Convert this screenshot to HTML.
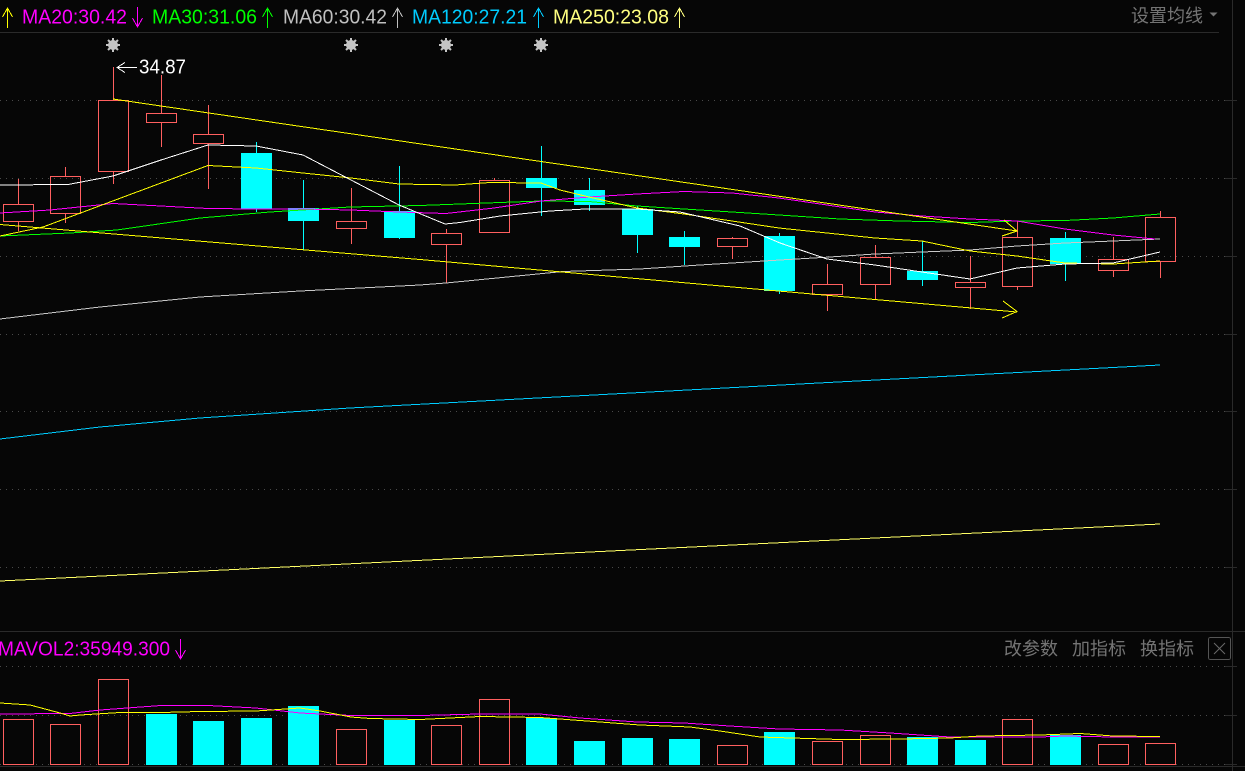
<!DOCTYPE html>
<html><head><meta charset="utf-8"><style>
html,body{margin:0;padding:0;background:#060606;width:1245px;height:771px;overflow:hidden}
svg{display:block;position:absolute;left:0;top:0}
text{font-family:"Liberation Sans","Noto Sans CJK SC",sans-serif}
</style></head><body>
<svg width="1245" height="771" viewBox="0 0 1245 771" xmlns="http://www.w3.org/2000/svg">
<rect width="1245" height="771" fill="#060606"/>
<g shape-rendering="crispEdges" fill="none">
<path d="M0 32.5H1219M0 631.5H1245M0 766.5H1245M1232.5 0V771" stroke="#2a2a2a"/>
<path d="M0 100.5H1225M0 178.5H1225M0 256.5H1225M0 334.5H1225M0 411.5H1225M0 489.5H1225M0 567.5H1225M0 666.5H1225M0 715.5H1225M0 764.5H1225" stroke="#4a4a4a" stroke-dasharray="1 5"/>
<path d="M1225 100.5H1237M1225 178.5H1237M1225 256.5H1237M1225 334.5H1237M1225 411.5H1237M1225 489.5H1237M1225 567.5H1237M1225 666.5H1237M1225 715.5H1237M1225 764.5H1237" stroke="#2a2a2a"/>
<!-- red candles -->
<g stroke="#ff5f5f">
<path d="M18.5 179V204M18.5 222V231M65.5 167V176M65.5 214V223M113.5 67V100M113.5 172V184M161.5 75V113M161.5 123V147M208.5 105V134M208.5 144V189M351.5 188V221M351.5 229V244M446.5 229V233M446.5 245V283M494.5 178V180M732.5 237V238M732.5 247V259M827.5 264V284M827.5 295V311M875.5 245V257M875.5 285V299M970.5 256V282M970.5 288V309M1017.5 221V237M1017.5 287V290M1113.5 237V259M1113.5 271V277M1160.5 211V217M1160.5 262V278"/>
<rect x="3.5" y="204.5" width="30" height="17"/>
<rect x="50.5" y="176.5" width="30" height="37"/>
<rect x="98.5" y="100.5" width="30" height="71"/>
<rect x="146.5" y="113.5" width="30" height="9"/>
<rect x="193.5" y="134.5" width="30" height="9"/>
<rect x="336.5" y="221.5" width="30" height="7"/>
<rect x="431.5" y="233.5" width="30" height="11"/>
<rect x="479.5" y="180.5" width="30" height="52"/>
<rect x="717.5" y="238.5" width="30" height="8"/>
<rect x="812.5" y="284.5" width="30" height="10"/>
<rect x="860.5" y="257.5" width="30" height="27"/>
<rect x="955.5" y="282.5" width="30" height="5"/>
<rect x="1002.5" y="237.5" width="30" height="49"/>
<rect x="1098.5" y="259.5" width="30" height="11"/>
<rect x="1145.5" y="217.5" width="30" height="44"/>
<!-- red volumes -->
<rect x="3.5" y="719.5" width="30" height="45"/>
<rect x="50.5" y="724.5" width="30" height="40"/>
<rect x="98.5" y="679.5" width="30" height="85"/>
<rect x="336.5" y="729.5" width="30" height="35"/>
<rect x="431.5" y="725.5" width="30" height="39"/>
<rect x="479.5" y="699.5" width="30" height="65"/>
<rect x="717.5" y="745.5" width="30" height="19"/>
<rect x="812.5" y="741.5" width="30" height="23"/>
<rect x="860.5" y="735.5" width="30" height="29"/>
<rect x="1002.5" y="719.5" width="30" height="45"/>
<rect x="1098.5" y="744.5" width="30" height="20"/>
<rect x="1145.5" y="743.5" width="30" height="21"/>
</g>
<!-- cyan wicks -->
<path stroke="#00ffff" d="M256.5 142V212M303.5 180V250M399.5 166V239M541.5 146V216M589.5 178V211M637.5 206V253M684.5 231V265M779.5 233V294M922.5 241V286M1065.5 232V281"/>
<!-- cyan bodies -->
<g fill="#00ffff">
<rect x="241" y="153" width="31" height="56"/>
<rect x="288" y="208" width="31" height="13"/>
<rect x="384" y="211" width="31" height="27"/>
<rect x="526" y="178" width="31" height="10"/>
<rect x="574" y="190" width="31" height="15"/>
<rect x="622" y="209" width="31" height="26"/>
<rect x="669" y="237" width="31" height="10"/>
<rect x="764" y="236" width="31" height="55"/>
<rect x="907" y="271" width="31" height="9"/>
<rect x="1050" y="238" width="31" height="26"/>
<rect x="146" y="714" width="31" height="51"/>
<rect x="193" y="721" width="31" height="44"/>
<rect x="241" y="718" width="31" height="47"/>
<rect x="288" y="706" width="31" height="59"/>
<rect x="384" y="720" width="31" height="45"/>
<rect x="526" y="718" width="31" height="47"/>
<rect x="574" y="741" width="31" height="24"/>
<rect x="622" y="738" width="31" height="27"/>
<rect x="669" y="739" width="31" height="26"/>
<rect x="764" y="732" width="31" height="33"/>
<rect x="907" y="737" width="31" height="28"/>
<rect x="955" y="740" width="31" height="25"/>
<rect x="1050" y="735" width="31" height="30"/>
</g>
</g>
<!-- MA lines -->
<g fill="none" stroke-width="1" shape-rendering="crispEdges">
<polyline stroke="#c8c8c8" points="0,319 100,307 200,297 300,291 420,285 446,283 563,271.5 640,269 700,265 780,260 830,257 875,254 922,252 970,250 1017,246 1065,243 1113,241 1160,239"/>
<polyline stroke="#00ccff" points="0,439 100,427 200,418 350,408 500,400 800,384 1160,365"/>
<polyline stroke="#ffff66" points="0,581 1160,524"/>
<polyline stroke="#00ff00" points="0,236 70,233 117,230 200,218 270,212 350,207 420,205.5 500,202.5 541,201 589,201.5 637,206 684,209 732,212 779,215 840,219 900,221 970,222.5 1017,221 1065,220.5 1113,218 1160,214"/>
<polyline stroke="#ff00ff" points="0,213 50,210 113,203.5 161,206 208,208.5 256,209 303,209 351,210 399,212 446,213.5 494,208 541,201 589,197 637,194 684,191.5 732,193 779,198 827,205 875,212 922,216 970,219 1017,221 1065,229 1113,235 1155,239"/>
<polyline stroke="#ffff00" points="0,236 43,227 110,202 161,183 208,165.5 256,168 303,173 351,178 399,184 455,185 490,182.5 541,183 560,190 589,197 637,208 684,214 732,221 779,228 827,233 875,238 922,241 970,251 1017,256 1065,263 1113,264 1160,261"/>
<polyline stroke="#ffffff" points="0,185 68,184.5 113,176 161,160 208,145 256,146 303,155 351,180 399,205 445,224 460,222.5 500,216 550,211 585,209 637,209 680,212 740,226 780,243 827,259 875,265 922,272 970,279 1017,268 1065,264 1113,263 1160,252"/>
<path stroke="#ffff00" d="M113 99L1017 231M1004 220L1017 231L1002 236M0 224.5L420 259.5L1017 312M1003 301L1017 311.5L1002 318"/>
<polyline stroke="#ff00ff" points="0,714 70,713.5 100,710 161,705.5 208,705.5 256,708 300,713 351,715.5 420,715.5 480,714 540,714 580,718 637,722 684,723 730,726 779,729 840,730 890,733 950,737 1000,737 1040,737 1065,736 1113,737 1160,737"/>
<polyline stroke="#ffff00" points="0,703 30,705 60,713 70,716 80,715 120,712.5 161,712.5 200,711.5 256,711 300,708 320,711 351,717 370,718.5 420,719.5 480,716.5 540,717.5 600,722 640,725 690,727 720,731 760,737 840,739.5 900,739 950,738 980,736 1040,735 1080,733.5 1113,736 1160,736.5"/>
</g>
<!-- top legend -->
<g font-size="20.5">
<text x="22" y="23.5" fill="#ff00ff" textLength="105" lengthAdjust="spacingAndGlyphs">MA20:30.42</text>
<text x="152" y="23.5" fill="#00ff00" textLength="105" lengthAdjust="spacingAndGlyphs">MA30:31.06</text>
<text x="283" y="23.5" fill="#c0c0c0" textLength="104" lengthAdjust="spacingAndGlyphs">MA60:30.42</text>
<text x="412" y="23.5" fill="#00ccff" textLength="115" lengthAdjust="spacingAndGlyphs">MA120:27.21</text>
<text x="553" y="23.5" fill="#ffff80" textLength="116" lengthAdjust="spacingAndGlyphs">MA250:23.08</text>
<text x="-2" y="655.5" fill="#ff00ff" textLength="172" lengthAdjust="spacingAndGlyphs">MAVOL2:35949.300</text>
<text x="139" y="73.5" fill="#ffffff" textLength="47" lengthAdjust="spacingAndGlyphs">34.87</text>
</g>
<g fill="none" stroke-width="1" shape-rendering="crispEdges">
<path stroke="#ffff00" d="M7.5 28V8M2.5 17L7.5 8L12.5 17"/>
<path stroke="#ff00ff" d="M137.5 7V27M132.5 18L137.5 27L142.5 18"/>
<path stroke="#00ff00" d="M267.5 28V8M262.5 17L267.5 8L272.5 17"/>
<path stroke="#c0c0c0" d="M397.5 28V8M392.5 17L397.5 8L402.5 17"/>
<path stroke="#00ccff" d="M538.5 28V8M533.5 17L538.5 8L543.5 17"/>
<path stroke="#ffff80" d="M679.5 28V8M674.5 17L679.5 8L684.5 17"/>
<path stroke="#ff00ff" d="M180.5 639V659M175.5 650L180.5 659L185.5 650"/>
<path stroke="#ffffff" d="M137 67.5H117M125 62.5L117 67.5L125 72.5"/>
</g>
<!-- star markers -->
<g fill="#c4c4c4" stroke="#c4c4c4" stroke-width="2">
<g transform="translate(113,45)"><circle r="5" stroke="none"/><path d="M-7 0H7M0 -7V7M-5 -5L5 5M-5 5L5 -5"/></g>
<g transform="translate(351,45)"><circle r="5" stroke="none"/><path d="M-7 0H7M0 -7V7M-5 -5L5 5M-5 5L5 -5"/></g>
<g transform="translate(446,45)"><circle r="5" stroke="none"/><path d="M-7 0H7M0 -7V7M-5 -5L5 5M-5 5L5 -5"/></g>
<g transform="translate(541,45)"><circle r="5" stroke="none"/><path d="M-7 0H7M0 -7V7M-5 -5L5 5M-5 5L5 -5"/></g>
</g>
<!-- right controls -->
<g font-size="18" fill="#747474">
<text x="1131" y="22">设置均线</text>
<text x="1004" y="655">改参数</text>
<text x="1072" y="655">加指标</text>
<text x="1140" y="655">换指标</text>
</g>
<path d="M1209.5 12.5H1217.5L1213.5 16.5Z" fill="#747474"/>
<rect x="1208.5" y="637.5" width="22" height="22" rx="2" fill="none" stroke="#555" shape-rendering="crispEdges"/>
<path d="M1214 643L1225 654M1225 643L1214 654" stroke="#6a6a6a" fill="none"/>
</svg>
</body></html>
